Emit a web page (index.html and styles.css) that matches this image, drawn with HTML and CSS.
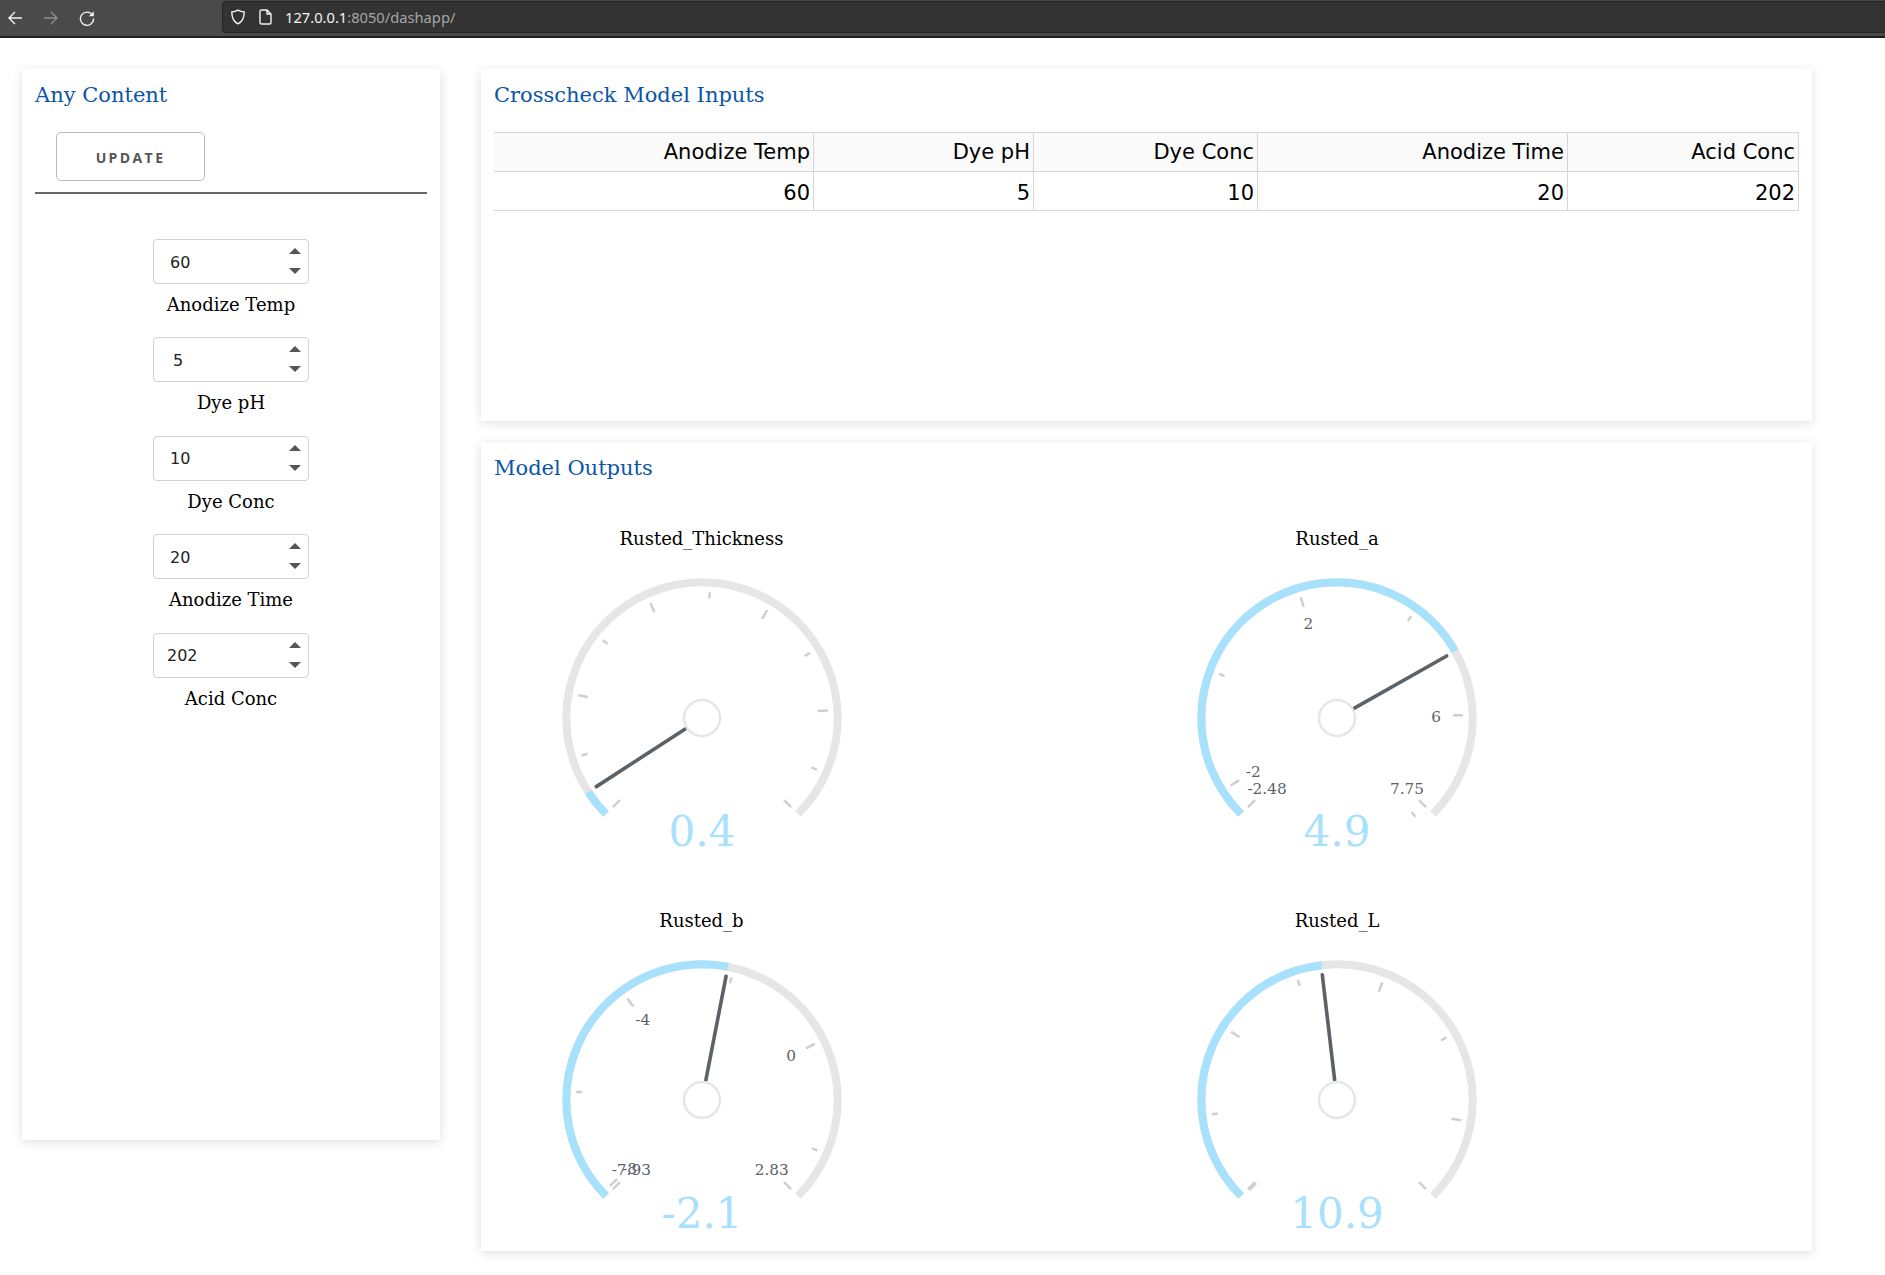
FILE: index.html
```html
<!DOCTYPE html>
<html>
<head lang="en">
    <meta charset="UTF-8">
    <title>Dash</title>
    <link rel="stylesheet" href="styles.css">
</head>
<body>
<div class="toolbar">
    <svg class="nav-icon" width="16" height="16" viewBox="0 0 16 16"><path d="M15 8H2M8 2L2 8l6 6"/></svg>
    <svg class="nav-icon nav-off" width="16" height="16" viewBox="0 0 16 16"><path d="M1 8h13M8 2l6 6-6 6"/></svg>
    <svg class="nav-icon" width="16" height="16" viewBox="0 0 16 16"><path d="M13.6 5.2A6.6 6.6 0 1 0 14.6 8.5"/><path class="nav-fill" d="M14.8 1.2v5h-5z"/></svg>
    <div class="url-field">
        <svg class="nav-icon" width="16" height="16" viewBox="0 0 16 16"><path d="M8 1.2c2 1.2 4 1.7 6.2 1.8 0 5.800-1.800 9.800-6.200 11.800C3.600 12.800 1.800 8.800 1.800 3 4 2.900 6 2.400 8 1.200z"/></svg>
        <svg class="nav-icon page-icon" width="14" height="16" viewBox="0 0 14 16"><path d="M2.500 1h5.500l4 4v8.500a1.500 1.500 0 0 1-1.500 1.500h-8A1.500 1.500 0 0 1 1 13.500v-11A1.500 1.500 0 0 1 2.500 1zM8 1v4h4"/></svg>
        <span class="url-host">127.0.0.1</span><span class="url-rest">:8050/dashapp/</span>
    </div>
</div>

<div class="page">
    <div class="card side-card">
        <h3 class="card-title">Any Content</h3>
        <button class="update-btn">UPDATE</button>
        <hr class="side-line">

        <div class="field">
            <div class="num-box"><input class="num-input two-digit" type="text" value="60"><span class="spin"><i class="spin-up"></i><i class="spin-down"></i></span></div>
            <label class="field-label">Anodize Temp</label>
        </div>
        <div class="field">
            <div class="num-box"><input class="num-input one-digit" type="text" value="5"><span class="spin"><i class="spin-up"></i><i class="spin-down"></i></span></div>
            <label class="field-label">Dye pH</label>
        </div>
        <div class="field">
            <div class="num-box"><input class="num-input two-digit" type="text" value="10"><span class="spin"><i class="spin-up"></i><i class="spin-down"></i></span></div>
            <label class="field-label">Dye Conc</label>
        </div>
        <div class="field">
            <div class="num-box"><input class="num-input two-digit" type="text" value="20"><span class="spin"><i class="spin-up"></i><i class="spin-down"></i></span></div>
            <label class="field-label">Anodize Time</label>
        </div>
        <div class="field">
            <div class="num-box"><input class="num-input three-digit" type="text" value="202"><span class="spin"><i class="spin-up"></i><i class="spin-down"></i></span></div>
            <label class="field-label">Acid Conc</label>
        </div>
    </div>

    <div class="main-col">
        <div class="card inputs-card">
            <h3 class="card-title">Crosscheck Model Inputs</h3>
            <table class="check-table">
                <colgroup>
                    <col class="col-temp"><col class="col-ph"><col class="col-conc"><col class="col-time"><col class="col-acid">
                </colgroup>
                <tr><th>Anodize Temp</th><th>Dye pH</th><th>Dye Conc</th><th>Anodize Time</th><th>Acid Conc</th></tr>
                <tr><td>60</td><td>5</td><td>10</td><td>20</td><td>202</td></tr>
            </table>
        </div>

        <div class="card outputs-card">
            <h3 class="card-title">Model Outputs</h3>
            <div class="gauge-grid">

                <div class="gauge">
                    <div class="gauge-title">Rusted_Thickness</div>
                    <svg class="gauge-svg" width="300" height="300" viewBox="-150 -150 300 300">
                        <circle class="arc-bg" r="135.7" pathLength="360" stroke-dasharray="270 90" transform="rotate(135)"/>
                        <circle class="arc-val" r="135.7" pathLength="360" stroke-dasharray="12 348" transform="rotate(135)"/>
                        <!-- ticks -->
                        <line class="tick" y1="-116" y2="-126" transform="rotate(-135)"/>
                        <line class="tick" y1="-120" y2="-126" transform="rotate(-107.300)"/>
                        <line class="tick" y1="-116" y2="-126" transform="rotate(-79.600)"/>
                        <line class="tick" y1="-120" y2="-126" transform="rotate(-51.900)"/>
                        <line class="tick" y1="-116" y2="-126" transform="rotate(-24.200)"/>
                        <line class="tick" y1="-120" y2="-126" transform="rotate(3.500)"/>
                        <line class="tick" y1="-116" y2="-126" transform="rotate(31.200)"/>
                        <line class="tick" y1="-120" y2="-126" transform="rotate(58.900)"/>
                        <line class="tick" y1="-116" y2="-126" transform="rotate(86.600)"/>
                        <line class="tick" y1="-120" y2="-126" transform="rotate(114.300)"/>
                        <line class="tick" y1="-116" y2="-126" transform="rotate(135)"/>
                        <line class="needle" y1="-20" y2="-126" transform="rotate(-123)"/>
                        <circle class="hub" r="18"/>
                        <text class="gauge-value" y="127.700">0.4</text>
                    </svg>
                </div>

                <div class="gauge">
                    <div class="gauge-title">Rusted_a</div>
                    <svg class="gauge-svg" width="300" height="300" viewBox="-150 -150 300 300">
                        <circle class="arc-bg" r="135.7" pathLength="360" stroke-dasharray="270 90" transform="rotate(135)"/>
                        <circle class="arc-val" r="135.7" pathLength="360" stroke-dasharray="195.500 164.500" transform="rotate(135)"/>
                        <line class="tick" y1="-116" y2="-126" transform="rotate(-135)"/>
                        <line class="tick" y1="-116" y2="-126" transform="rotate(-122.400)"/>
                        <line class="tick" y1="-120" y2="-126" transform="rotate(-69.500)"/>
                        <line class="tick" y1="-116" y2="-126" transform="rotate(-16.700)"/>
                        <line class="tick" y1="-120" y2="-126" transform="rotate(36.100)"/>
                        <line class="tick" y1="-116" y2="-126" transform="rotate(88.700)"/>
                        <line class="tick" y1="-120" y2="-126" transform="rotate(141.600)"/>
                        <line class="tick" y1="-116" y2="-126" transform="rotate(135)"/>
                        <text class="tick-label" x="-83.700" y="58.500">-2</text>
                        <text class="tick-label" x="-70" y="75.500">-2.48</text>
                        <text class="tick-label" x="-28.700" y="-89.500">2</text>
                        <text class="tick-label" x="99" y="3.500">6</text>
                        <text class="tick-label" x="70" y="75.500">7.75</text>
                        <line class="needle" y1="-20" y2="-126" transform="rotate(60.500)"/>
                        <circle class="hub" r="18"/>
                        <text class="gauge-value" y="127.700">4.9</text>
                    </svg>
                </div>

                <div class="gauge">
                    <div class="gauge-title">Rusted_b</div>
                    <svg class="gauge-svg" width="300" height="300" viewBox="-150 -150 300 300">
                        <circle class="arc-bg" r="135.7" pathLength="360" stroke-dasharray="270 90" transform="rotate(135)"/>
                        <circle class="arc-val" r="135.7" pathLength="360" stroke-dasharray="146 214" transform="rotate(135)"/>
                        <line class="tick" y1="-116" y2="-126" transform="rotate(-135)"/>
                        <line class="tick" y1="-116" y2="-126" transform="rotate(-133)"/>
                        <line class="tick" y1="-120" y2="-126" transform="rotate(-86.300)"/>
                        <line class="tick" y1="-116" y2="-126" transform="rotate(-36.300)"/>
                        <line class="tick" y1="-120" y2="-126" transform="rotate(13.500)"/>
                        <line class="tick" y1="-116" y2="-126" transform="rotate(63.600)"/>
                        <line class="tick" y1="-120" y2="-126" transform="rotate(113.700)"/>
                        <line class="tick" y1="-116" y2="-126" transform="rotate(135)"/>
                        <text class="tick-label" x="-72.500" y="73.600">-8</text>
                        <text class="tick-label" x="-70.700" y="74.900">-7.93</text>
                        <text class="tick-label" x="-59.300" y="-75.100">-4</text>
                        <text class="tick-label" x="89" y="-38.800">0</text>
                        <text class="tick-label" x="69.700" y="74.900">2.83</text>
                        <line class="needle" y1="-20" y2="-126" transform="rotate(11)"/>
                        <circle class="hub" r="18"/>
                        <text class="gauge-value" y="127.700">-2.1</text>
                    </svg>
                </div>

                <div class="gauge">
                    <div class="gauge-title">Rusted_L</div>
                    <svg class="gauge-svg" width="300" height="300" viewBox="-150 -150 300 300">
                        <circle class="arc-bg" r="135.7" pathLength="360" stroke-dasharray="270 90" transform="rotate(135)"/>
                        <circle class="arc-val" r="135.7" pathLength="360" stroke-dasharray="128.500 231.500" transform="rotate(135)"/>
                        <line class="tick" y1="-116" y2="-126" transform="rotate(-135)"/>
                        <line class="tick" y1="-116" y2="-126" transform="rotate(-135.800)"/>
                        <line class="tick" y1="-120" y2="-126" transform="rotate(-96.500)"/>
                        <line class="tick" y1="-116" y2="-126" transform="rotate(-57.200)"/>
                        <line class="tick" y1="-120" y2="-126" transform="rotate(-18.100)"/>
                        <line class="tick" y1="-116" y2="-126" transform="rotate(21.100)"/>
                        <line class="tick" y1="-120" y2="-126" transform="rotate(60.200)"/>
                        <line class="tick" y1="-116" y2="-126" transform="rotate(99.300)"/>
                        <line class="tick" y1="-116" y2="-126" transform="rotate(135)"/>
                        <line class="needle" y1="-20" y2="-126" transform="rotate(-6.700)"/>
                        <circle class="hub" r="18"/>
                        <text class="gauge-value" y="127.700">10.9</text>
                    </svg>
                </div>

            </div>
        </div>
    </div>
</div>
</body>
</html>
```

FILE: styles.css
```css
*{
    box-sizing: border-box;
    margin:0;
    padding:0;
}
body{
    background:#fff;
    font-family:"DejaVu Serif", serif;
    color:#000;
}

/* browser bar */
.toolbar{
    height:38px;
    background:#4a4a4a;
    border-bottom:2px solid #202020;
    display:flex;
    align-items:flex-start;
    padding-left:7px;
}
.toolbar > .nav-icon{
    margin-top:10px;
    margin-right:20px;
}
.toolbar > .nav-icon:nth-child(3){
    margin-right:0;
}
.nav-icon{
    fill:none;
    stroke:#f2f2f2;
    stroke-width:1.4;
    flex:none;
}
.nav-off{
    stroke:#8e8e8e;
}
.nav-fill{
    fill:#f2f2f2;
    stroke:none;
}
.url-field{
    flex:1;
    height:32px;
    margin-top:1px;
    margin-left:127px;
    background:#333;
    border:1px solid #262626;
    border-right:0;
    border-radius:4px 0 0 4px;
    display:flex;
    align-items:center;
    padding-left:7px;
    font-family:"Noto Sans", sans-serif;
    font-size:14.7px;
}
.page-icon{
    margin-left:13px;
    margin-right:12px;
}
.url-host{
    color:#f4f4f4;
}
.url-rest{
    color:#a6a6a6;
}

/* layout */
.page{
    display:flex;
    align-items:flex-start;
    gap:41px;
    padding:31px 0 24px 22px;
}
.card{
    background:#fff;
    box-shadow:0 2px 10px rgba(0,0,0,.13);
    padding:14px 13px 13px;
}
.card-title{
    font-size:21px;
    font-weight:normal;
    line-height:24px;
    color:#0b55a6;
}
.side-card{
    width:418px;
    height:1071px;
}
.main-col{
    width:1331px;
    display:flex;
    flex-direction:column;
    gap:21px;
}
.inputs-card{
    height:352px;
}
.outputs-card{
    height:809px;
}

/* side panel */
.update-btn{
    display:block;
    width:149px;
    height:49px;
    margin:25px 0 0 21px;
    padding-top:2px;
    background:#fff;
    border:1px solid #bbb;
    border-radius:5px;
    font-family:"Open Sans", sans-serif;
    font-size:14px;
    font-weight:700;
    letter-spacing:2.4px;
    color:#555;
}
.side-line{
    border:0;
    border-top:2px solid #666;
    margin-top:11px;
}
.field{
    width:156px;
    height:98.4px;
    margin:0 auto;
    text-align:center;
}
.side-line + .field{
    margin-top:45px;
}
.num-box{
    position:relative;
    height:45px;
}
.num-input{
    width:100%;
    height:45px;
    padding-top:1px;
    border:1px solid #d1d1d1;
    border-radius:4px;
    font-family:"DejaVu Sans", sans-serif;
    font-size:16px;
    color:#222;
    outline:none;
}
.one-digit{
    padding-left:19px;
}
.two-digit{
    padding-left:16px;
}
.three-digit{
    padding-left:13px;
}
.spin{
    position:absolute;
    right:8px;
    top:9px;
    width:12px;
}
.spin-up,
.spin-down{
    display:block;
    width:0;
    border-left:6px solid transparent;
    border-right:6px solid transparent;
}
.spin-up{
    border-bottom:6px solid #555;
}
.spin-down{
    margin-top:14px;
    border-top:6px solid #555;
}
.field-label{
    display:block;
    margin-top:9px;
    font-size:18px;
    line-height:24px;
    white-space:nowrap;
}

/* table */
.check-table{
    width:1304.500px;
    margin-top:25px;
    border-collapse:collapse;
    table-layout:fixed;
    font-family:"DejaVu Sans", sans-serif;
    font-size:21px;
}
.col-temp{ width:319.500px; }
.col-ph{ width:220px; }
.col-conc{ width:224px; }
.col-time{ width:310px; }
.col-acid{ width:231px; }
.check-table th,
.check-table td{
    height:39px;
    padding:0 3px;
    text-align:right;
    font-weight:normal;
    border:1px solid #d6d6d6;
}
.check-table td{
    padding-top:3px;
}
.check-table th{
    background:#fafafa;
}
.check-table th:first-child,
.check-table td:first-child{
    border-left:0;
}

/* gauges */
.gauge-grid{
    display:grid;
    grid-template-columns:415px 415px;
    column-gap:220.6px;
    row-gap:40px;
    margin-top:47px;
}
.gauge{
    height:341.7px;
    text-align:center;
}
.gauge-title{
    font-size:18px;
    line-height:24px;
}
.gauge-svg{
    display:block;
    margin:17.3px auto 0;
}
.arc-bg,
.arc-val{
    fill:none;
    stroke-width:8;
}
.arc-bg{
    stroke:#e6e6e6;
}
.arc-val{
    stroke:#a8e1fc;
}
.tick{
    stroke:#cfcfcf;
    stroke-width:2.5;
}
.needle{
    stroke:#5b6268;
    stroke-width:3.6;
    stroke-linecap:round;
}
.hub{
    fill:#fff;
    stroke:#e6e6e6;
    stroke-width:2.5;
}
.tick-label{
    font-size:15.3px;
    fill:#5b6268;
    text-anchor:middle;
}
.gauge-value{
    font-size:42px;
    fill:#a8e1fc;
    text-anchor:middle;
}
```
